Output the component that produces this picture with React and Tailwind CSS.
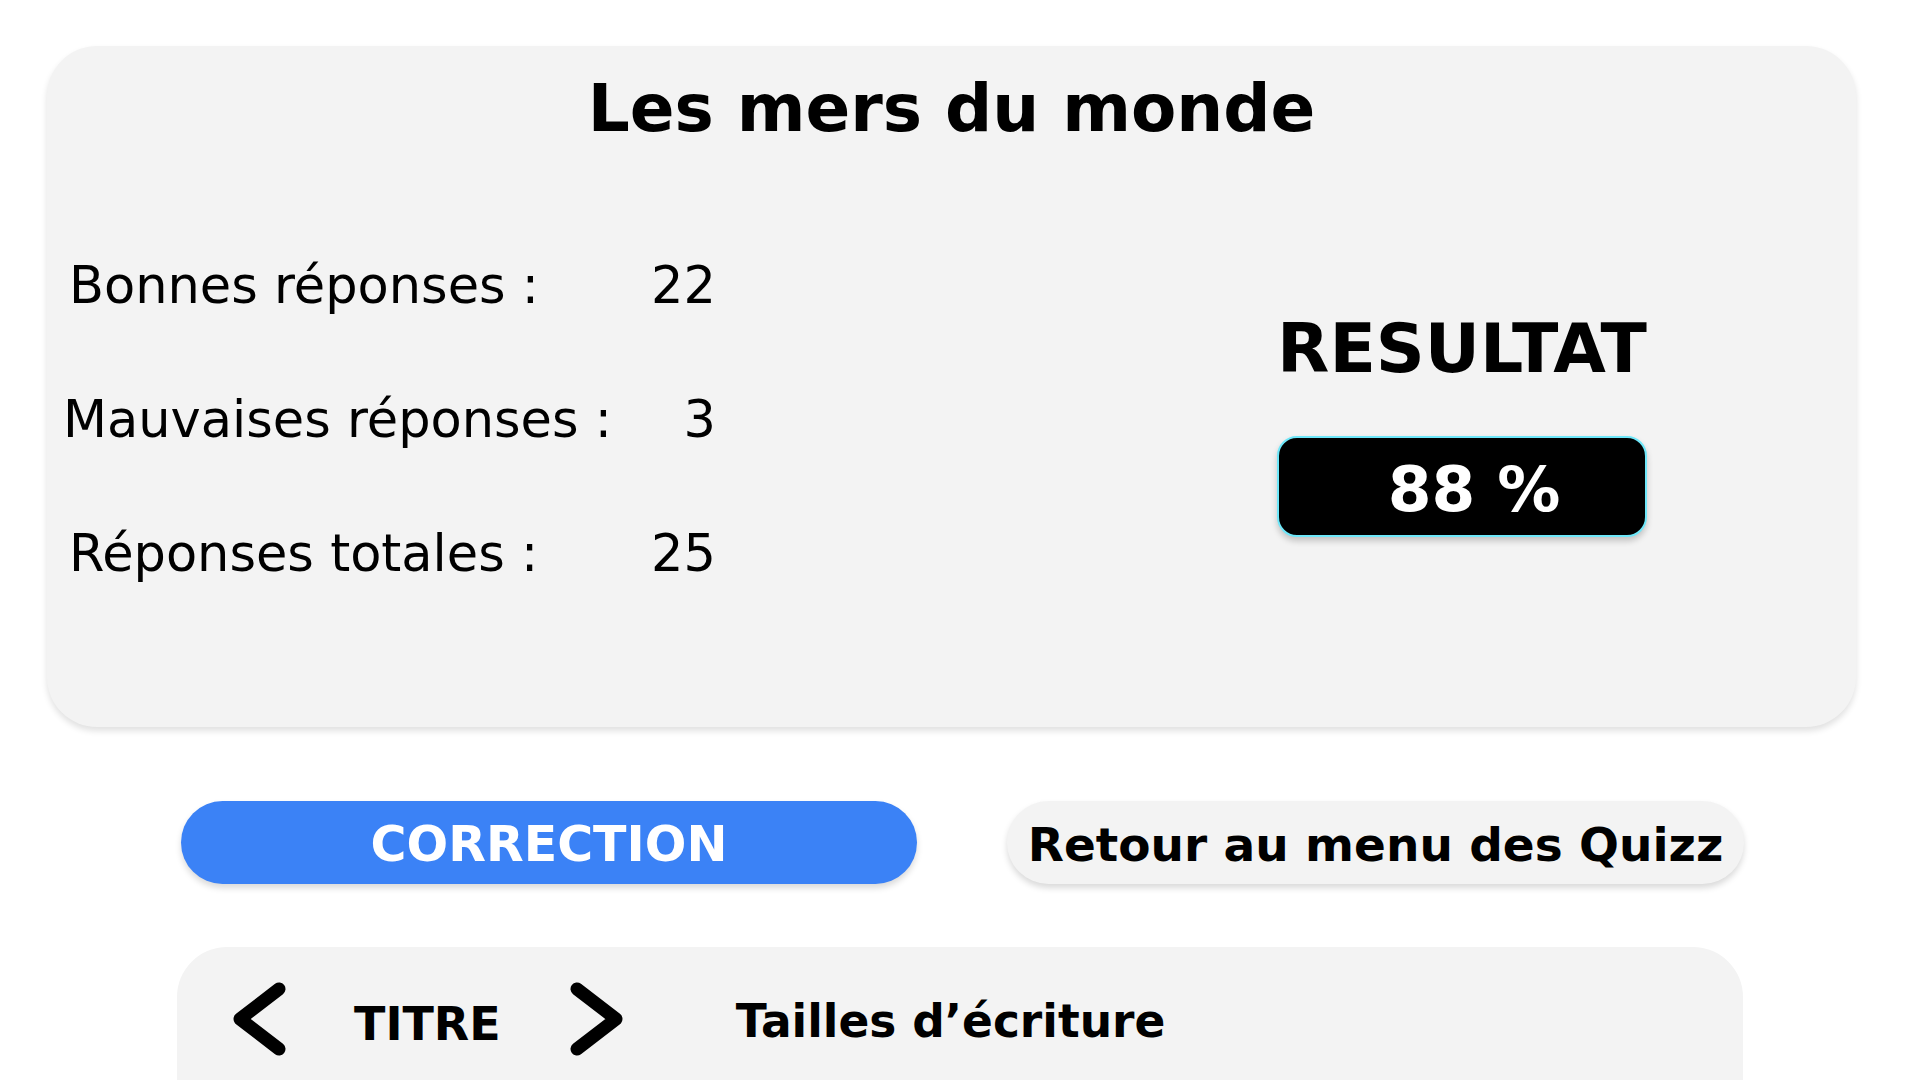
import React from 'react';

const stats = [
  { label: 'Bonnes réponses :', value: 22, shift: '' },
  { label: 'Mauvaises réponses :', value: 3, shift: '-ml-[6px] w-[653px]' },
  { label: 'Réponses totales :', value: 25, shift: '' },
];

const Chevron = ({ dir = 'left' }) => (
  <svg width="54" height="74" viewBox="0 0 54 74" className="shrink-0">
    <polyline
      points={dir === 'left' ? '46,7 7,37 46,67' : '8,7 47,37 8,67'}
      fill="none"
      stroke="#000"
      strokeWidth="13"
      strokeLinecap="round"
      strokeLinejoin="round"
    />
  </svg>
);

const App = () => {
  return (
    <div className="h-[1080px] overflow-hidden bg-white font-['DejaVu_Sans',sans-serif] text-black">
      {/* Result card */}
      <div className="ml-[47px] mt-[46px] h-[681px] w-[1809px] rounded-[50px] bg-[#f3f3f3] shadow-[0_4px_6px_rgba(0,0,0,0.12)] flex flex-col">
        <h1 className="pt-[30px] text-center text-[66px] font-bold leading-none">Les mers du monde</h1>

        <div className="flex justify-between pl-[22px] pr-[209px]">
          {/* Stats */}
          <div className="mt-[118px] flex flex-col gap-[83px]">
            {stats.map((s) => (
              <div
                key={s.label}
                className={`flex justify-between text-[51px] leading-none ${s.shift || 'w-[647px]'}`}
              >
                <span>{s.label}</span>
                <span>{s.value}</span>
              </div>
            ))}
          </div>

          {/* Result */}
          <div className="mt-[173px] flex w-[370px] flex-col items-center">
            <div className="text-[68px] font-bold leading-none">RESULTAT</div>
            <div className="mt-[53px] flex h-[101px] w-[370px] items-center justify-center rounded-[20px] border-2 border-[#6ee7f9] bg-black pl-[24px] pt-[6px] shadow-[0_4px_6px_rgba(0,0,0,0.2)]">
              <span className="text-[63px] font-bold leading-none text-white">88 %</span>
            </div>
          </div>
        </div>
      </div>

      {/* Buttons */}
      <div className="ml-[181px] mt-[74px] flex w-[1563px] justify-between">
        <button className="flex h-[83px] w-[736px] items-center justify-center rounded-full bg-[#3b82f6] pt-[4px] text-[49px] font-black leading-none text-white shadow-[0_4px_6px_rgba(0,0,0,0.15)]">
          CORRECTION
        </button>
        <button className="flex h-[83px] w-[737px] items-center justify-center rounded-full bg-[#f3f3f3] pt-[4px] text-[47px] font-bold leading-none shadow-[0_4px_6px_rgba(0,0,0,0.15)]">
          Retour au menu des Quizz
        </button>
      </div>

      {/* Correction panel */}
      <div className="mx-auto mt-[63px] h-[300px] w-[1566px] rounded-t-[50px] bg-[#f3f3f3]">
        <div className="flex items-start pl-[56px] pt-[35px]">
          <Chevron dir="left" />
          <span className="ml-[67px] mt-[19px] text-[46px] font-bold leading-none">TITRE</span>
          <span className="ml-[68px]">
            <Chevron dir="right" />
          </span>
          <span className="ml-[113px] mt-[17px] text-[45.5px] font-bold leading-none">Tailles d’écriture</span>
        </div>
      </div>
    </div>
  );
};

export default App;
